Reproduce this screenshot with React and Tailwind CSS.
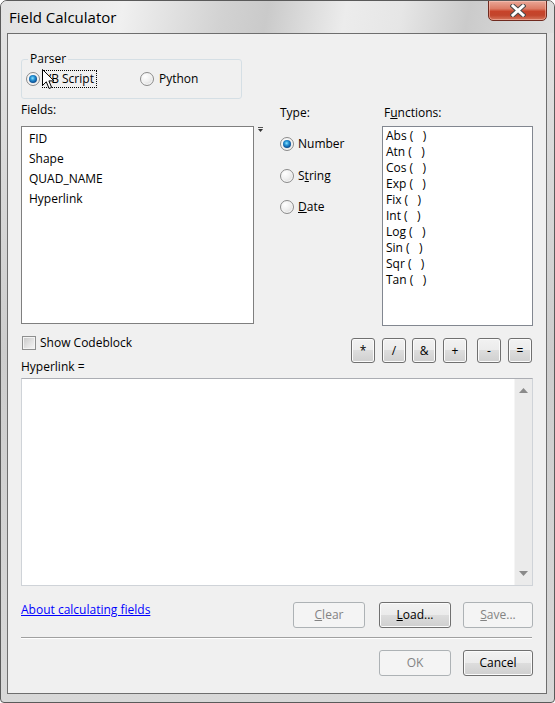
import React from "react";

function Radio({ checked }) {
  return (
    <span className="w-[14px] h-[14px] rounded-full border border-[#8b8b8b] bg-[radial-gradient(circle_at_35%_30%,#ffffff_0%,#f0f0f0_45%,#cfcfcf_100%)] flex items-center justify-center shrink-0 shadow-[inset_0_0_0_1px_#f7f7f7]">
      {checked && (
        <span className="w-[8px] h-[8px] rounded-full bg-[radial-gradient(circle_at_45%_40%,#8fe2ff_0%,#2c9ad8_30%,#105ea6_60%,#082c55_100%)]" />
      )}
    </span>
  );
}

function Checkbox() {
  return (
    <span className="w-[14px] h-[14px] border border-[#8e8f8f] bg-[#f4f4f4] flex items-center justify-center shrink-0">
      <span className="w-[10px] h-[10px] bg-[linear-gradient(135deg,#cbcbcb_0%,#e4e4e4_60%,#f3f3f3_100%)]" />
    </span>
  );
}

const btn =
  "h-[26px] rounded-[3px] border border-[#707070] bg-[linear-gradient(#f2f2f2_0%,#ebebeb_50%,#dddddd_50%,#cfcfcf_100%)] shadow-[inset_0_0_0_1px_#fbfbfb] flex items-center justify-center text-[12px] text-black";
const btnOff =
  "h-[26px] rounded-[3px] border border-[#adb2b5] bg-[#f4f4f4] flex items-center justify-center text-[12px] text-[#838383]";
const opBtn =
  "w-[24px] h-[25px] rounded-[3px] border border-[#707070] bg-[linear-gradient(#f2f2f2_0%,#ebebeb_50%,#dddddd_50%,#cfcfcf_100%)] shadow-[inset_0_0_0_1px_#fbfbfb] flex items-center justify-center text-[12px] text-black leading-none";

const fields = ["FID", "Shape", "QUAD_NAME", "Hyperlink"];
const funcs = ["Abs", "Atn", "Cos", "Exp", "Fix", "Int", "Log", "Sin", "Sqr", "Tan"];

export default function App() {
  return (
    <div className="w-[555px] h-[703px] bg-white font-['Open_Sans',sans-serif] text-[12px] text-black">
      <div className="w-[555px] h-[703px] flex flex-col border border-[#5a5a5a] rounded-t-[7px] rounded-b-[4px] bg-[linear-gradient(to_bottom,#e4e4e4,#cdcdcd_50%,#d8d8d8)] overflow-hidden">
        {/* title bar */}
        <div className="h-[32px] flex items-start justify-between pl-[8px] pr-[7px] bg-[linear-gradient(100deg,#e2e2e2_0%,#f0f0f0_22%,#d2d2d2_40%,#cacaca_48%,#ececec_62%,#e6e6e6_72%,#cbcbcb_84%,#dedede_100%)]">
          <span className="mt-[6px] text-[15px] leading-[20px] text-black font-['Open_Sans',sans-serif]">
            Field Calculator
          </span>
          <div className="w-[59px] h-[21px] mt-[-1px] rounded-b-[5px] border border-[#6f2a1f] bg-[linear-gradient(#e9a797_0%,#dc7c66_40%,#c7432a_55%,#c2452c_75%,#d5755c_100%)] shadow-[inset_0_0_0_1px_rgba(255,210,200,0.45)] flex items-center justify-center">
            <svg width="16" height="13" viewBox="0 0 16 13">
              <path d="M3 2 L13 11 M13 2 L3 11" stroke="#4a4a4a" strokeWidth="5" strokeLinecap="square" />
              <path d="M3 2 L13 11 M13 2 L3 11" stroke="#ffffff" strokeWidth="3" strokeLinecap="square" />
            </svg>
          </div>
        </div>

        {/* client area */}
        <div className="flex-1 ml-[6px] mr-[7px] mb-[8px] border border-[#6e6e6e] bg-[#f0f0f0] pl-[13px] pr-[12px] pt-[17px] flex flex-col">
          {/* parser group */}
          <fieldset className="w-[221px] h-[48px] border border-[#d5dfe5] rounded-[3px] px-[4px]">
            <legend className="ml-[2px] px-[2px] leading-[16px]">Parser</legend>
            <div className="relative flex items-center h-[16px] mt-[4px]">
              <Radio checked />
              <span className="ml-[2px] w-[55px] h-[18px] border border-dotted border-[#000] flex items-center pl-[1px] leading-[16px]">
                VB Script
              </span>
              <span className="ml-[43px]">
                <Radio />
              </span>
              <span className="ml-[5px] leading-[16px]">Python</span>
              <svg
                className="absolute left-[16px] top-[-2px]"
                width="13"
                height="21"
                viewBox="0 0 13 21"
              >
                <path
                  d="M0.5 0.5 L0.5 16.5 L4.3 12.8 L7.1 19.5 L9.6 18.4 L6.9 11.9 L12 11.9 Z"
                  fill="#ffffff"
                  stroke="#000000"
                  strokeWidth="1"
                  strokeLinejoin="miter"
                />
              </svg>
            </div>
          </fieldset>

          {/* three columns */}
          <div className="flex mt-[3px]">
            <div className="w-[233px] flex flex-col">
              <span className="leading-[16px]">Fields:</span>
              <div className="mt-[8px] h-[198px] border border-[#7f7f7f] bg-white pl-[7px] pt-[2px]">
                {fields.map((f) => (
                  <div key={f} className="leading-[20px]">
                    {f}
                  </div>
                ))}
              </div>
            </div>
            <div className="ml-[4px] mt-[25px] w-[5px] h-[6px]">
              <svg width="5" height="6" viewBox="0 0 5 6">
                <rect x="0" y="0" width="5" height="1" fill="#555" />
                <path d="M0 2 L5 2 L2.5 5 Z" fill="#333" />
              </svg>
            </div>
            <div className="ml-[17px] w-[102px] pt-[3px] flex flex-col">
              <span className="leading-[16px]">Type:</span>
              <div className="flex items-center h-[16px] mt-[15px]">
                <Radio checked />
                <span className="ml-[4px]">Number</span>
              </div>
              <div className="flex items-center h-[16px] mt-[16px]">
                <Radio />
                <span className="ml-[4px]">
                  S<span className="underline">t</span>ring
                </span>
              </div>
              <div className="flex items-center h-[16px] mt-[15px]">
                <Radio />
                <span className="ml-[4px]">
                  <span className="underline">D</span>ate
                </span>
              </div>
            </div>
            <div className="w-[151px] pt-[3px] flex flex-col">
              <span className="leading-[16px] ml-[2px]">
                F<span className="underline">u</span>nctions:
              </span>
              <div className="mt-[5px] h-[200px] border border-[#828790] bg-white pl-[3px] pt-[1px]">
                {funcs.map((f) => (
                  <div key={f} className="leading-[16px] whitespace-pre">
                    {f + " (   )"}
                  </div>
                ))}
              </div>
            </div>
          </div>

          {/* codeblock + operators */}
          <div className="flex mt-[10px]">
            <div className="flex flex-col">
              <div className="flex items-center h-[14px] ml-[1px]">
                <Checkbox />
                <span className="ml-[4px] leading-[16px]">Show Codeblock</span>
              </div>
              <span className="mt-[9px] leading-[16px]">Hyperlink =</span>
            </div>
            <div className="ml-auto mr-[2px] mt-[2px] flex items-start">
              <div className={opBtn}>*</div>
              <div className={opBtn + " ml-[7px]"}>/</div>
              <div className={opBtn + " ml-[6px]"}>&amp;</div>
              <div className={opBtn + " ml-[7px]"}>+</div>
              <div className={opBtn + " ml-[10px]"}>-</div>
              <div className={opBtn + " ml-[7px]"}>=</div>
            </div>
          </div>

          {/* expression box */}
          <div className="mt-[3px] mr-[1px] h-[208px] border border-[#cfd3d8] border-t-[#abadb3] bg-white flex">
            <div className="flex-1" />
            <div className="w-[18px] bg-[#ebebeb] border-l border-[#f5f5f5] flex flex-col items-center justify-between pt-[9px] pb-[9px]">
              <svg width="9" height="5" viewBox="0 0 9 5">
                <path d="M0 5 L4.5 0 L9 5 Z" fill="#8a8a8a" />
              </svg>
              <svg width="9" height="5" viewBox="0 0 9 5">
                <path d="M0 0 L9 0 L4.5 5 Z" fill="#8a8a8a" />
              </svg>
            </div>
          </div>

          {/* link + clear/load/save */}
          <div className="flex items-start mt-[16px]">
            <a className="leading-[14px] text-[#0000ff] underline cursor-pointer mt-[1px]">
              About calculating fields
            </a>
            <div className={btnOff + " ml-auto w-[72px]"}>
              <span>
                <span className="underline">C</span>lear
              </span>
            </div>
            <div className={btn + " ml-[14px] w-[72px]"}>
              <span>
                <span className="underline">L</span>oad...
              </span>
            </div>
            <div className={btnOff + " ml-[12px] mr-[1px] w-[70px]"}>
              <span>
                <span className="underline">S</span>ave...
              </span>
            </div>
          </div>

          {/* separator */}
          <div className="mt-[9px] mr-[2px] h-[1px] bg-[#a0a0a0]" />
          <div className="mr-[2px] h-[1px] bg-[#ffffff]" />

          {/* OK / Cancel */}
          <div className="flex mt-[11px]">
            <div className={btnOff + " ml-auto w-[72px]"}>OK</div>
            <div className={btn + " ml-[12px] mr-[1px] w-[70px]"}>Cancel</div>
          </div>
        </div>
      </div>
    </div>
  );
}
